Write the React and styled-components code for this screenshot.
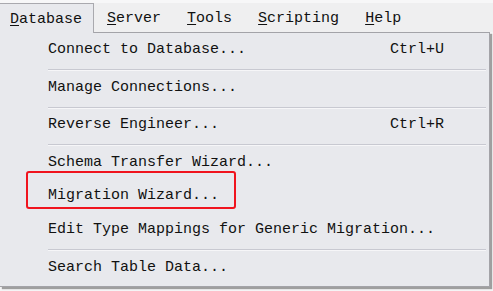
import React from "react";
import styled, { createGlobalStyle } from "styled-components";

const GlobalStyle = createGlobalStyle`
  html, body { margin: 0; padding: 0; background: #f4f4f5; }
  body { font-family: "Liberation Mono", "DejaVu Sans Mono", monospace; }
`;

const Screen = styled.div`
  position: relative;
  width: 493px;
  height: 291px;
  overflow: hidden;
  background: #f4f4f5;
  font-family: "Liberation Mono", "DejaVu Sans Mono", monospace;
  font-size: 15px;
  color: #111;
`;

const MenuBar = styled.div`
  display: flex;
  align-items: flex-end;
  height: 32px;
  box-sizing: border-box;
  padding-top: 3px;
  background: linear-gradient(#f7f7f8 0 3px, #efeff0 3px);
`;

const MenuTitle = styled.div`
  position: relative;
  z-index: 2;
  display: flex;
  align-items: center;
  box-sizing: border-box;
  height: ${(p) => (p.$active ? "30px" : "29px")};
  margin-bottom: ${(p) => (p.$active ? "-1px" : "0")};
  padding: 1px ${(p) => (p.$active ? "11px" : "13px")} 0
    ${(p) => (p.$first ? "10px" : "13px")};
  background: ${(p) => (p.$active ? "#e8e9ed" : "transparent")};
  border: ${(p) => (p.$active ? "1px solid #a9a9ae" : "none")};
  border-bottom: none;
  border-left: none;
  line-height: 17px;
  white-space: pre;

  u {
    text-decoration: underline;
    text-underline-offset: 2px;
  }
`;

const Dropdown = styled.div`
  position: relative;
  z-index: 1;
  width: 490px;
  box-sizing: border-box;
  background: #e8e9ed;
  border: 1px solid #a3a3a8;
  border-left: none;
  padding: 1px 0;
  box-shadow: 2px 2px 1px rgba(0, 0, 0, 0.35);
`;

const Item = styled.div`
  display: flex;
  box-sizing: border-box;
  height: 33.75px;
  padding: 7px 0 0 48px;
  line-height: 17px;
  white-space: pre;
`;

const Label = styled.span`
  width: 342px;
  flex: none;
`;

const Shortcut = styled.span`
  flex: none;
`;

const Separator = styled.div`
  height: 3.75px;
  display: flex;
  align-items: center;
  padding-left: 48px;
  padding-right: 3px;

  &::before {
    content: "";
    flex: 1;
    height: 1px;
    background: #c8c9d1;
    box-shadow: 0 1px 0 #f6f6f8;
  }
`;

const Highlight = styled.div`
  position: absolute;
  left: 26px;
  top: 171px;
  width: 210px;
  height: 38px;
  box-sizing: border-box;
  border: 2px solid #f0141e;
  border-radius: 3px;
  z-index: 3;
`;

const titles = [
  { m: "D", rest: "atabase", active: true },
  { m: "S", rest: "erver" },
  { m: "T", rest: "ools" },
  { m: "S", rest: "cripting" },
  { m: "H", rest: "elp" },
];

const entries = [
  { label: "Connect to Database...", shortcut: "Ctrl+U" },
  "sep",
  { label: "Manage Connections..." },
  "sep",
  { label: "Reverse Engineer...", shortcut: "Ctrl+R" },
  "sep",
  { label: "Schema Transfer Wizard..." },
  { label: "Migration Wizard..." },
  { label: "Edit Type Mappings for Generic Migration..." },
  "sep",
  { label: "Search Table Data..." },
];

export default function App() {
  return (
    <>
      <GlobalStyle />
      <Screen>
        <MenuBar>
          {titles.map((t, i) => (
            <MenuTitle key={i} $active={t.active} $first={i === 0}>
              <u>{t.m}</u>
              {t.rest}
            </MenuTitle>
          ))}
        </MenuBar>
        <Dropdown>
          {entries.map((e, i) =>
            e === "sep" ? (
              <Separator key={i} />
            ) : (
              <Item key={i}>
                <Label>{e.label}</Label>
                {e.shortcut && <Shortcut>{e.shortcut}</Shortcut>}
              </Item>
            )
          )}
        </Dropdown>
        <Highlight />
      </Screen>
    </>
  );
}
